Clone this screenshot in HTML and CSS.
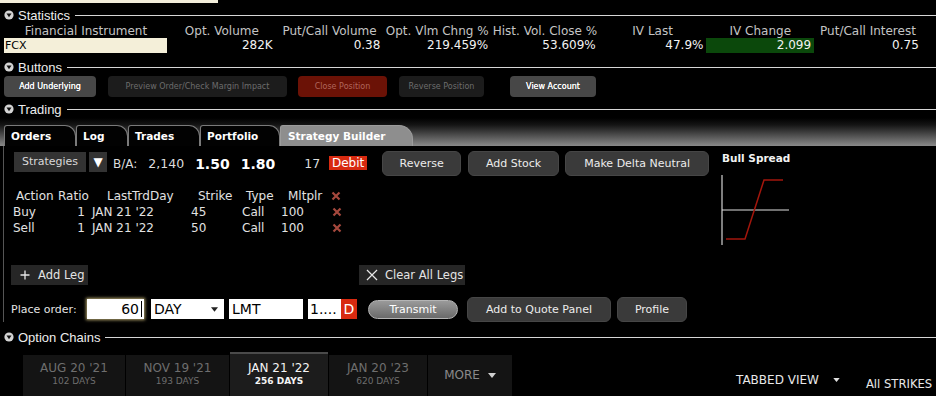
FILE: index.html
```html
<!DOCTYPE html>
<html lang="en">
<head>
    <meta charset="UTF-8">
    <meta name="viewport" content="width=device-width, initial-scale=1.0">
    <title>Strategy Builder - FCX</title>
    <link rel="stylesheet" href="styles.css">
</head>
<body>
    <div class="top-stub"></div>

    <!-- Statistics -->
    <div class="sect-head first">
        <svg class="tri" viewBox="0 0 10 10"><circle cx="5" cy="5" r="4.6" fill="#d4d4d4"/><path d="M2.5 3.6 H7.5 L5 7.2 Z" fill="#111"/></svg>
        <span>Statistics</span><span class="rule"></span>
    </div>
    <div class="stats">
        <div class="stat-head">Financial Instrument</div>
        <div class="stat-head">Opt. Volume</div>
        <div class="stat-head">Put/Call Volume</div>
        <div class="stat-head">Opt. Vlm Chng %</div>
        <div class="stat-head">Hist. Vol. Close %</div>
        <div class="stat-head">IV Last</div>
        <div class="stat-head">IV Change</div>
        <div class="stat-head">Put/Call Interest</div>

        <div class="stat-val sym">FCX</div>
        <div class="stat-val">282K</div>
        <div class="stat-val">0.38</div>
        <div class="stat-val">219.459%</div>
        <div class="stat-val">53.609%</div>
        <div class="stat-val">47.9%</div>
        <div class="stat-val up">2.099</div>
        <div class="stat-val">0.75</div>
    </div>

    <!-- Buttons -->
    <div class="sect-head">
        <svg class="tri" viewBox="0 0 10 10"><circle cx="5" cy="5" r="4.6" fill="#d4d4d4"/><path d="M2.5 3.6 H7.5 L5 7.2 Z" fill="#111"/></svg>
        <span>Buttons</span><span class="rule"></span>
    </div>
    <div class="btn-row">
        <button class="tool-btn add-under">Add Underlying</button>
        <button class="tool-btn off preview">Preview Order/Check Margin Impact</button>
        <button class="tool-btn close-pos">Close Position</button>
        <button class="tool-btn off reverse-pos">Reverse Position</button>
        <button class="tool-btn view-acct">View Account</button>
    </div>

    <!-- Trading -->
    <div class="sect-head trading">
        <svg class="tri" viewBox="0 0 10 10"><circle cx="5" cy="5" r="4.6" fill="#d4d4d4"/><path d="M2.5 3.6 H7.5 L5 7.2 Z" fill="#111"/></svg>
        <span>Trading</span><span class="rule"></span>
    </div>
    <div class="tabbar">
        <div class="tab t-orders">Orders</div>
        <div class="tab t-log">Log</div>
        <div class="tab t-trades">Trades</div>
        <div class="tab t-portfolio">Portfolio</div>
        <div class="tab t-builder active">Strategy Builder</div>
    </div>

    <div class="trade-body">
        <div class="builder">
            <div class="strat-row">
                <div class="pick">Strategies</div>
                <div class="pick-arrow">▼</div>
                <span class="ba-label">B/A:</span>
                <span class="ba-size">2,140</span>
                <span class="ba-px bid">1.50</span>
                <span class="ba-px ask">1.80</span>
                <span class="ba-qty">17</span>
                <span class="debit">Debit</span>
                <button class="mac-btn reverse">Reverse</button>
                <button class="mac-btn add-stock">Add Stock</button>
                <button class="mac-btn delta">Make Delta Neutral</button>
            </div>

            <div class="legs">
                <div class="leg-row head">
                    <span>Action</span><span>Ratio</span><span>LastTrdDay</span><span>Strike</span><span>Type</span><span>Mltplr</span>
                    <span><svg class="x" viewBox="0 0 10 10"><path d="M1.5 1.5 L8.5 8.5 M8.5 1.5 L1.5 8.5"/></svg></span>
                </div>
                <div class="leg-row">
                    <span>Buy</span><span>1</span><span>JAN 21 '22</span><span>45</span><span>Call</span><span>100</span>
                    <span><svg class="x" viewBox="0 0 10 10"><path d="M1.5 1.5 L8.5 8.5 M8.5 1.5 L1.5 8.5"/></svg></span>
                </div>
                <div class="leg-row">
                    <span>Sell</span><span>1</span><span>JAN 21 '22</span><span>50</span><span>Call</span><span>100</span>
                    <span><svg class="x" viewBox="0 0 10 10"><path d="M1.5 1.5 L8.5 8.5 M8.5 1.5 L1.5 8.5"/></svg></span>
                </div>
            </div>

            <div class="leg-actions">
                <button class="flat-btn add-leg">
                    <svg viewBox="0 0 10 10"><path d="M5 0.5 V9.5 M0.5 5 H9.5"/></svg>Add Leg
                </button>
                <button class="flat-btn clear-legs">
                    <svg viewBox="0 0 10 10"><path d="M0.8 0.8 L9.2 9.2 M9.2 0.8 L0.8 9.2"/></svg>Clear All Legs
                </button>
            </div>

            <div class="order-row">
                <span class="order-label">Place order:</span>
                <div class="field qty">60<span class="caret"></span></div>
                <div class="field tif">DAY<svg viewBox="0 0 8 5"><path d="M0 0 H8 L4 5 Z"/></svg></div>
                <div class="field otype">LMT</div>
                <div class="field price">1....</div>
                <div class="dir">D</div>
                <button class="transmit">Transmit</button>
                <button class="mac-btn quote">Add to Quote Panel</button>
                <button class="mac-btn profile-btn">Profile</button>
            </div>
        </div>

        <div class="profile">
            <div class="profile-title">Bull Spread</div>
            <svg class="payoff" viewBox="0 0 72 72">
                <line x1="2" y1="1" x2="2" y2="71" stroke="#a8a8a8" stroke-width="1.5"/>
                <line x1="2" y1="36" x2="69" y2="36" stroke="#e0e0e0" stroke-width="1"/>
                <polyline points="6,65 25,65 44,6 63,6" fill="none" stroke="#a3160c" stroke-width="1.5"/>
            </svg>
        </div>
    </div>

    <!-- Option Chains -->
    <div class="sect-head chains">
        <svg class="tri" viewBox="0 0 10 10"><circle cx="5" cy="5" r="4.6" fill="#d4d4d4"/><path d="M2.5 3.6 H7.5 L5 7.2 Z" fill="#111"/></svg>
        <span>Option Chains</span><span class="rule"></span>
    </div>
    <div class="chain-row">
        <div class="expiries">
            <div class="exp e1"><span class="exp-date">AUG 20 '21</span><span class="exp-days">102 DAYS</span></div>
            <div class="exp e2"><span class="exp-date">NOV 19 '21</span><span class="exp-days">193 DAYS</span></div>
            <div class="exp e3 active"><span class="exp-date">JAN 21 '22</span><span class="exp-days">256 DAYS</span></div>
            <div class="exp e4"><span class="exp-date">JAN 20 '23</span><span class="exp-days">620 DAYS</span></div>
            <div class="exp more"><span>MORE</span><svg viewBox="0 0 8 5"><path d="M0 0 H8 L4 5 Z"/></svg></div>
        </div>
        <div class="view-pick">TABBED VIEW <svg viewBox="0 0 8 5"><path d="M0 0 H8 L4 5 Z"/></svg></div>
        <div class="strikes">All STRIKES</div>
    </div>
</body>
</html>
```

FILE: styles.css
```css
* { box-sizing: border-box; }

body {
    margin: 0;
    width: 936px;
    height: 396px;
    overflow: hidden;
    background: #000;
    color: #e4e4e4;
    font-family: "DejaVu Sans", sans-serif;
    font-size: 12px;
}

button { font-family: "DejaVu Sans", sans-serif; cursor: pointer; }

.top-stub { width: 218px; height: 3px; background: #f3eedb; }

/* Section headers */
.sect-head {
    display: flex;
    align-items: center;
    height: 18px;
    padding-left: 4px;
    font-family: "Liberation Sans", Arial, sans-serif;
    font-size: 13px;
    color: #ededed;
}
.sect-head.first { margin-top: 3px; }
.sect-head .tri { width: 10px; height: 10px; margin-right: 4px; flex-shrink: 0; }
.sect-head .rule { flex: 1; height: 1px; background: #d6d6d6; margin-left: 5px; }

/* Statistics */
.stats {
    display: grid;
    grid-template-columns: 164px repeat(7, 107.7px);
    padding-left: 4px;
}
.stat-head {
    height: 14px;
    line-height: 14px;
    text-align: center;
    white-space: nowrap;
    color: #c4c4c4;
}
.stat-val {
    height: 15px;
    line-height: 15px;
    text-align: right;
    padding-right: 3px;
    color: #f2f2f2;
}
.stat-val.sym {
    background: #f4efd9;
    color: #000;
    text-align: left;
    padding-left: 1px;
    font-size: 11px;
    margin-right: 1px;
}
.stat-val.up { background: #0b480b; }

/* Buttons bar */
.btn-row { display: flex; height: 21px; padding-left: 4px; }
.stats + .sect-head { margin-top: 5px; }
.tool-btn {
    height: 21px;
    padding: 0;
    border: 0;
    border-radius: 4px;
    background: #474747;
    color: #fff;
    font-size: 8px;
    text-shadow: 0 0 0.5px #fff;
}
.tool-btn.off { background: #1c1c1c; color: #6c6c6c; text-shadow: none; }
.tool-btn.close-pos { background: #6b1206; color: #b0665c; text-shadow: none; }
.add-under { width: 92px; }
.preview { width: 179px; margin-left: 12px; }
.close-pos { width: 89px; margin-left: 11px; }
.reverse-pos { width: 85px; margin-left: 12px; }
.view-acct { width: 86px; margin-left: 26px; }

/* Trading tabs */
.sect-head.trading { margin-top: 3px; }
.tabbar {
    display: flex;
    align-items: flex-end;
    height: 28px;
    padding-left: 4px;
    background: linear-gradient(#000 0%, #151515 25%, #8a8a8a 100%);
}
.tab {
    height: 21px;
    padding-left: 6px;
    line-height: 20px;
    background: #020202;
    border: 1px solid #7a7a7a;
    border-bottom: 0;
    border-radius: 3px 11px 0 0;
    color: #fff;
    font-weight: bold;
    font-size: 10.5px;
}
.tab.active { background: #8e8e8e; border-color: #9c9c9c; padding-left: 7px; }
.t-orders { width: 72px; }
.t-log { width: 52px; }
.t-trades { width: 72px; }
.t-portfolio { width: 80px; }
.t-builder { width: 133px; border-radius: 3px 14px 0 0; }

.trade-body {
    display: flex;
    height: 176px;
    margin-left: 3px;
    border-left: 1px solid #555;
}
.builder { width: 718px; }

/* strategy row */
.strat-row {
    display: flex;
    align-items: center;
    height: 25px;
    margin-top: 5px;
    padding-left: 10px;
}
.pick, .pick-arrow {
    height: 20px;
    line-height: 20px;
    background: #333;
    color: #d8d8d8;
    font-size: 11px;
    text-align: center;
    margin-bottom: 3px;
}
.pick { width: 72px; }
.pick-arrow { width: 18px; margin-left: 3px; color: #fff; font-size: 12px; }
.ba-label { margin-left: 6px; font-size: 12px; color: #dcdcdc; }
.ba-size { margin-left: 11px; font-size: 12.5px; color: #dcdcdc; }
.ba-px { font-size: 14px; font-weight: bold; color: #fff; }
.bid { margin-left: 11px; }
.ask { margin-left: 11px; }
.ba-qty { margin-left: 29px; font-size: 12.5px; color: #dcdcdc; }
.debit {
    margin-left: 9px;
    margin-bottom: 2px;
    width: 38px;
    height: 14px;
    line-height: 14px;
    text-align: center;
    background: #d82a10;
    color: #fff;
    font-size: 12px;
}
.mac-btn {
    height: 25px;
    padding: 0;
    border: 1px solid #464646;
    border-radius: 6px;
    background: #3a3a3a;
    color: #ececec;
    font-size: 11px;
}
.reverse { width: 79px; margin-left: 15px; }
.add-stock { width: 91px; margin-left: 7px; }
.delta { width: 144px; margin-left: 6px; }

/* legs table */
.legs { margin-top: 12px; padding-left: 8px; }
.leg-row {
    display: grid;
    grid-template-columns: 44px 32px 95px 55px 40px 48px 20px;
    height: 16px;
    line-height: 16px;
    color: #e2e2e2;
    white-space: nowrap;
}
.leg-row span:nth-child(1) { padding-left: 1px; }
.leg-row span:nth-child(2) { text-align: right; padding-right: 3px; }
.leg-row span:nth-child(3) { padding-left: 4px; }
.leg-row span:nth-child(4) { padding-left: 8px; }
.leg-row span:nth-child(5) { padding-left: 4px; }
.leg-row span:nth-child(6) { padding-left: 3px; }
.leg-row span:nth-child(7) { display: flex; align-items: center; padding-left: 6px; }
.leg-row.head span:nth-child(1) { padding-left: 4px; }
.leg-row.head span:nth-child(2) { text-align: left; padding-left: 2px; padding-right: 0; }
.leg-row.head span:nth-child(3) { padding-left: 19px; }
.leg-row.head span:nth-child(4) { padding-left: 15px; }
.leg-row.head span:nth-child(5) { padding-left: 8px; }
.leg-row.head span:nth-child(6) { padding-left: 10px; }
.leg-row.head span:nth-child(7) { padding-left: 5px; }
.x { width: 10px; height: 10px; stroke: #a5483d; stroke-width: 2.2; fill: none; }

/* add / clear legs */
.leg-actions { display: flex; height: 20px; margin-top: 29px; padding-left: 7px; }
.flat-btn {
    display: flex;
    align-items: center;
    height: 20px;
    padding: 0 0 0 9px;
    border: 0;
    background: #262626;
    color: #e4e4e4;
    font-size: 11.5px;
}
.flat-btn svg { width: 10px; height: 10px; margin-right: 8px; stroke: #e8e8e8; stroke-width: 1.3; fill: none; }
.add-leg { width: 77px; }
.clear-legs { width: 106px; margin-left: 271px; padding-left: 7px; }
.clear-legs svg { width: 12px; height: 12px; margin-right: 7px; stroke-width: 1; }

/* place order */
.order-row {
    display: flex;
    align-items: center;
    height: 24px;
    margin-top: 12px;
    padding-left: 7px;
}
.order-label { font-size: 11px; color: #e4e4e4; width: 76px; }
.field {
    display: flex;
    align-items: center;
    height: 20px;
    background: #fff;
    color: #000;
    font-size: 14px;
}
.qty {
    width: 57px;
    justify-content: flex-end;
    padding-right: 2px;
    box-shadow: 0 0 3px 1px #b3a46d;
}
.qty .caret { width: 1px; height: 16px; background: #000; margin-left: 2px; }
.tif { width: 73px; margin-left: 7px; padding: 0 6px 0 3px; justify-content: space-between; }
.tif svg { width: 7px; height: 5px; fill: #222; }
.otype { width: 74px; margin-left: 5px; padding-left: 3px; }
.price { width: 33px; margin-left: 5px; padding-left: 2px; }
.dir {
    width: 16px;
    height: 20px;
    line-height: 20px;
    text-align: center;
    background: #d82a10;
    color: #fff;
    font-size: 14px;
}
.transmit {
    width: 90px;
    height: 19px;
    margin-left: 11px;
    padding: 0;
    border: 1px solid #b4b4b4;
    border-radius: 10px;
    background: linear-gradient(#9a9a9a, #6a6a6a);
    color: #fff;
    font-size: 11px;
}
.quote { width: 144px; margin-left: 9px; }
.profile-btn { width: 70px; margin-left: 6px; }

/* payoff profile */
.profile { padding-top: 6px; }
.profile-title { font-size: 10.5px; font-weight: bold; color: #f2f2f2; line-height: 13px; }
.payoff { display: block; width: 72px; height: 72px; margin-top: 9px; margin-left: -2px; }

/* Option chains */
.sect-head.chains { margin-top: 6px; }
.chain-row { display: flex; align-items: flex-start; margin-top: 6px; white-space: nowrap; }
.expiries { display: flex; margin-left: 23px; }
.exp {
    display: flex;
    flex-direction: column;
    align-items: center;
    height: 44px;
    margin-top: 3px;
    margin-right: 1px;
    padding-top: 6px;
    background: #141414;
    color: #6e6e6e;
}
.exp-date { font-size: 12px; line-height: 14px; }
.exp-days { font-size: 9px; line-height: 12px; }
.e1 { width: 102px; }
.e2 { width: 103px; }
.e3 { width: 98px; }
.e4 { width: 98px; }
.exp.active {
    margin-top: 0;
    height: 47px;
    padding-top: 7px;
    border-top: 2px solid #4a4a4a;
    background: #1c1c1c;
    color: #f4f4f4;
}
.exp.active .exp-days { font-weight: bold; }
.exp.more {
    width: 84px;
    flex-direction: row;
    justify-content: center;
    align-items: flex-start;
    padding-top: 13px;
    font-size: 12px;
    color: #8a8a8a;
}
.exp.more svg { width: 8px; height: 5px; margin-left: 8px; margin-top: 5px; fill: #d0d0d0; }
.view-pick {
    margin-left: 223px;
    margin-top: 21px;
    font-size: 12px;
    color: #e8e8e8;
    display: flex;
    align-items: center;
}
.view-pick svg { width: 7px; height: 4px; margin-left: 14px; fill: #e0e0e0; }
.strikes { margin-left: 26px; margin-top: 25px; font-size: 11.6px; color: #e8e8e8; flex-shrink: 0; }
```
